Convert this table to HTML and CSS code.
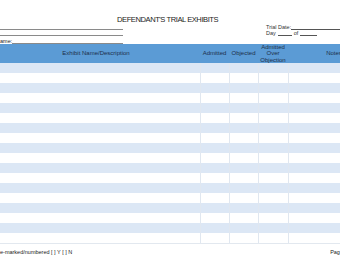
FILE: index.html
```html
<!DOCTYPE html>
<html>
<head>
<meta charset="utf-8">
<link rel="stylesheet" href="styles.css">
</head>
<body>
<div class="page">
  <div class="title">DEFENDANT'S TRIAL EXHIBITS</div>
  <div class="meta">
    <div class="lines">
      <div class="ln l1"></div>
      <div class="ln l2"></div>
      <div class="l3"><span class="lbl">ame:</span><span class="fill"></span></div>
    </div>
    <div class="trial">
      <div class="tline">Trial Date:<span class="u u-date"></span></div>
      <div class="tline">Day <span class="u u-day"></span> of <span class="u u-of"></span></div>
    </div>
  </div>
  <div class="table">
    <div class="head">
      <div class="hc c-name">Exhibit Name/Description</div>
      <div class="hc">Admitted</div>
      <div class="hc">Objected</div>
      <div class="hc">Admitted<br>Over<br>Objection</div>
      <div class="hc c-notes">Notes</div>
    </div>
    <div class="body">
      <div class="row"><div class="c c-name"></div><div class="c"></div><div class="c"></div><div class="c"></div><div class="c"></div></div>
      <div class="row"><div class="c c-name"></div><div class="c"></div><div class="c"></div><div class="c"></div><div class="c"></div></div>
      <div class="row"><div class="c c-name"></div><div class="c"></div><div class="c"></div><div class="c"></div><div class="c"></div></div>
      <div class="row"><div class="c c-name"></div><div class="c"></div><div class="c"></div><div class="c"></div><div class="c"></div></div>
      <div class="row"><div class="c c-name"></div><div class="c"></div><div class="c"></div><div class="c"></div><div class="c"></div></div>
      <div class="row"><div class="c c-name"></div><div class="c"></div><div class="c"></div><div class="c"></div><div class="c"></div></div>
      <div class="row"><div class="c c-name"></div><div class="c"></div><div class="c"></div><div class="c"></div><div class="c"></div></div>
      <div class="row"><div class="c c-name"></div><div class="c"></div><div class="c"></div><div class="c"></div><div class="c"></div></div>
      <div class="row"><div class="c c-name"></div><div class="c"></div><div class="c"></div><div class="c"></div><div class="c"></div></div>
      <div class="row"><div class="c c-name"></div><div class="c"></div><div class="c"></div><div class="c"></div><div class="c"></div></div>
      <div class="row"><div class="c c-name"></div><div class="c"></div><div class="c"></div><div class="c"></div><div class="c"></div></div>
      <div class="row"><div class="c c-name"></div><div class="c"></div><div class="c"></div><div class="c"></div><div class="c"></div></div>
      <div class="row"><div class="c c-name"></div><div class="c"></div><div class="c"></div><div class="c"></div><div class="c"></div></div>
      <div class="row"><div class="c c-name"></div><div class="c"></div><div class="c"></div><div class="c"></div><div class="c"></div></div>
      <div class="row"><div class="c c-name"></div><div class="c"></div><div class="c"></div><div class="c"></div><div class="c"></div></div>
      <div class="row"><div class="c c-name"></div><div class="c"></div><div class="c"></div><div class="c"></div><div class="c"></div></div>
      <div class="row"><div class="c c-name"></div><div class="c"></div><div class="c"></div><div class="c"></div><div class="c"></div></div>
      <div class="row"><div class="c c-name"></div><div class="c"></div><div class="c"></div><div class="c"></div><div class="c"></div></div>
    </div>
  </div>
  <div class="footer">
    <span class="fl">e-marked/numbered [ ] Y [ ] N</span>
    <span class="fr">Page</span>
  </div>
</div>
</body>
</html>
```

FILE: styles.css
```css
html, body {
  margin: 0;
  padding: 0;
  background: #ffffff;
}
body {
  width: 340px;
  height: 270px;
  overflow: hidden;
  font-family: "Liberation Sans", Arial, sans-serif;
  color: #222;
}
.page {
  width: 340px;
  overflow: hidden;
}
.title {
  height: 24px;
  box-sizing: border-box;
  padding-top: 15px;
  padding-left: 117px;
  font-size: 7.6px;
  line-height: 10px;
  letter-spacing: -0.45px;
  color: #222;
  white-space: nowrap;
}
.meta {
  display: flex;
  height: 20px;
}
.lines {
  width: 123px;
}
.ln {
  height: 5px;
  border-bottom: 1px solid #8a8a8a;
}
.l3 {
  display: flex;
  align-items: flex-end;
  height: 8px;
  font-size: 5.5px;
  line-height: 6px;
}
.l3 .lbl {
  white-space: nowrap;
}
.l3 .fill {
  flex: 1;
  border-bottom: 1px solid #8a8a8a;
  height: 1px;
}
.trial {
  margin-left: auto;
  width: 74px;
  font-size: 5.5px;
  line-height: 6px;
  white-space: nowrap;
  color: #333;
}
.tline {
  display: flex;
  align-items: flex-end;
  height: 6px;
}
.u {
  display: inline-block;
  border-bottom: 1px solid #555;
  height: 5px;
}
.u-date { flex: 1; }
.u-day { width: 14px; margin: 0 2px; }
.u-of { width: 17px; margin-left: 2px; }

.table {
  margin-left: -8px;
  width: 400px;
}
.head, .row {
  display: grid;
  grid-template-columns: 208px 29px 29px 30px 92px;
}
.head {
  height: 19px;
  background: #5b9bd5;
  color: #1c2f4a;
  font-size: 6px;
  line-height: 6.4px;
}
.hc {
  display: flex;
  align-items: center;
  justify-content: center;
  text-align: center;
  white-space: nowrap;
}
.row {
  height: 10px;
}
.row:nth-child(odd) {
  background: #dce7f5;
}
.row:last-child {
  border-bottom: 1px solid #e2e8ef;
}
.c {
  border-left: 1px solid #e0e7f0;
}
.c.c-name {
  border-left: none;
}
.footer {
  display: flex;
  justify-content: space-between;
  padding-top: 5px;
  font-size: 5.5px;
  line-height: 6px;
  color: #222;
  white-space: nowrap;
}
.fr {
  margin-right: -3px;
}
```
